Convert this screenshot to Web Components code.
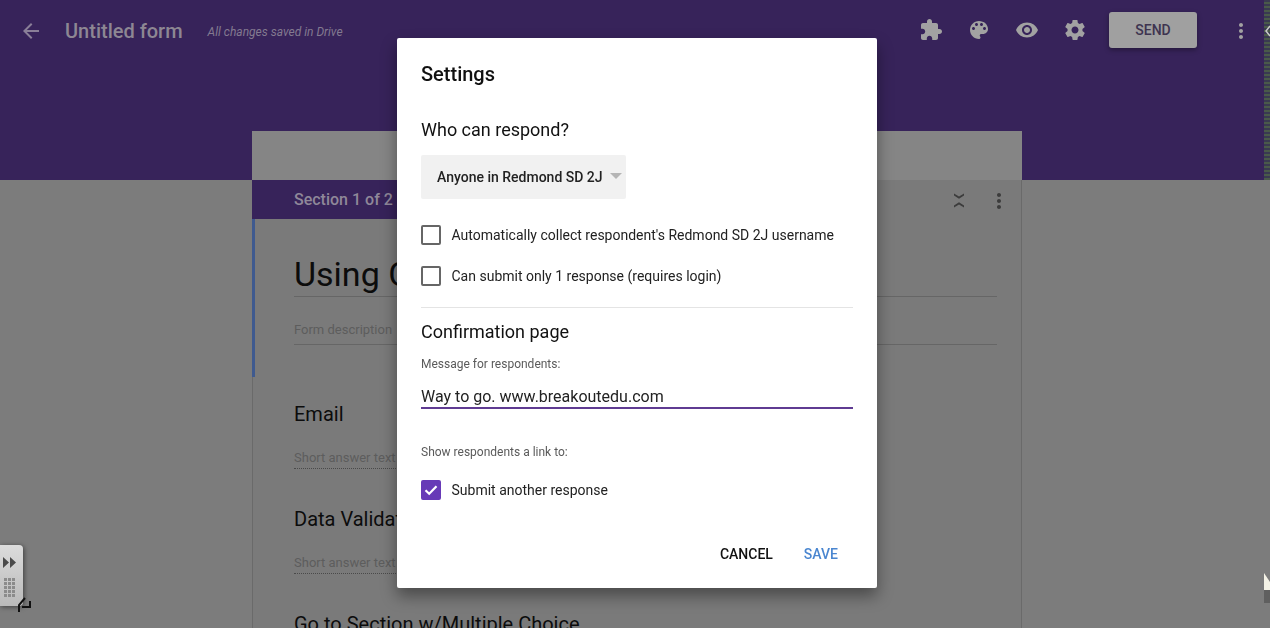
<!DOCTYPE html>
<html>
<head>
<meta charset="utf-8">
<title>Untitled form</title>
<style>
  html, body { margin: 0; height: 628px; overflow: hidden; background: #7c7c7c; }
  body { font-family: Roboto, "Liberation Sans", sans-serif; }
</style>
</head>
<body>
<form-page></form-page>
<settings-dialog></settings-dialog>
<float-palette></float-palette>

<script>
const ICONS = {
  back: "M20 11H7.83l5.59-5.59L12 4l-8 8 8 8 1.41-1.41L7.83 13H20v-2z",
  addon: "M20.5 11H19V7c0-1.1-.9-2-2-2h-4V3.5C13 2.12 11.88 1 10.5 1S8 2.12 8 3.5V5H4c-1.1 0-1.99.9-1.99 2v3.8H3.5c1.49 0 2.7 1.21 2.7 2.7s-1.21 2.7-2.7 2.7H2V20c0 1.1.9 2 2 2h3.8v-1.5c0-1.49 1.21-2.7 2.7-2.7 1.49 0 2.7 1.21 2.7 2.7V22H17c1.1 0 2-.9 2-2v-4h1.5c1.38 0 2.5-1.12 2.5-2.5S21.88 11 20.5 11z",
  palette: "M12 3c-4.97 0-9 4.03-9 9s4.03 9 9 9c.83 0 1.5-.67 1.5-1.5 0-.39-.15-.74-.39-1.01-.23-.26-.38-.61-.38-.99 0-.83.67-1.5 1.5-1.5H16c2.76 0 5-2.24 5-5 0-4.42-4.03-8-9-8zm-5.5 9c-.83 0-1.5-.67-1.5-1.5S5.67 9 6.5 9 8 9.67 8 10.5 7.33 12 6.5 12zm3-4C8.67 8 8 7.33 8 6.5S8.67 5 9.5 5s1.5.67 1.5 1.5S10.33 8 9.5 8zm5 0c-.83 0-1.5-.67-1.5-1.5S13.67 5 14.5 5s1.5.67 1.5 1.5S15.33 8 14.5 8zm3 4c-.83 0-1.5-.67-1.5-1.5S16.67 9 17.5 9s1.5.67 1.5 1.5-.67 1.5-1.5 1.5z",
  eye: "M12 4.5C7 4.5 2.73 7.61 1 12c1.73 4.39 6 7.5 11 7.5s9.27-3.11 11-7.5c-1.73-4.39-6-7.5-11-7.5zM12 17c-2.76 0-5-2.24-5-5s2.24-5 5-5 5 2.24 5 5-2.24 5-5 5zm0-8c-1.66 0-3 1.34-3 3s1.34 3 3 3 3-1.34 3-3-1.34-3-3-3z",
  gear: "M19.43 12.98c.04-.32.07-.64.07-.98s-.03-.66-.07-.98l2.11-1.65c.19-.15.24-.42.12-.64l-2-3.46c-.12-.22-.39-.3-.61-.22l-2.49 1c-.52-.4-1.08-.73-1.69-.98l-.38-2.65C14.46 2.18 14.25 2 14 2h-4c-.25 0-.46.18-.49.42l-.38 2.65c-.61.25-1.17.59-1.69.98l-2.49-1c-.23-.09-.49 0-.61.22l-2 3.46c-.13.22-.07.49.12.64l2.11 1.65c-.04.32-.07.65-.07.98s.03.66.07.98l-2.11 1.65c-.19.15-.24.42-.12.64l2 3.46c.12.22.39.3.61.22l2.49-1c.52.4 1.08.73 1.69.98l.38 2.65c.03.24.24.42.49.42h4c.25 0 .46-.18.49-.42l.38-2.65c.61-.25 1.17-.59 1.69-.98l2.49 1c.23.09.49 0 .61-.22l2-3.46c.12-.22.07-.49-.12-.64l-2.11-1.65zM12 15.5c-1.93 0-3.5-1.57-3.5-3.5s1.57-3.5 3.5-3.5 3.5 1.57 3.5 3.5-1.57 3.5-3.5 3.5z",
  more: "M12 8c1.1 0 2-.9 2-2s-.9-2-2-2-2 .9-2 2 .9 2 2 2zm0 2c-1.1 0-2 .9-2 2s.9 2 2 2 2-.9 2-2-.9-2-2-2zm0 6c-1.1 0-2 .9-2 2s.9 2 2 2 2-.9 2-2-.9-2-2-2z",
  collapse: "M7 4.5l5 3 5-3v2l-5 3.2-5-3.2zM7 18.5l5-3 5 3v-2l-5-3.2-5 3.2z"
};

class MdIcon extends HTMLElement {
  connectedCallback() {
    const size = this.getAttribute("size") || 24;
    this.attachShadow({mode: "open"}).innerHTML = `
      <style>
        :host { display: block; width: ${size}px; height: ${size}px; flex: none; }
        svg { display: block; width: 100%; height: 100%; fill: currentColor; }
      </style>
      <svg viewBox="0 0 24 24"><path d="${ICONS[this.getAttribute("name")]}"/></svg>`;
  }
}
customElements.define("md-icon", MdIcon);

class TopBar extends HTMLElement {
  connectedCallback() {
    this.attachShadow({mode: "open"}).innerHTML = `
      <style>
        :host { display: flex; align-items: center; height: 60px; color: #a2a2a2; }
        md-icon.back { margin: 2px 0 0 19px; color: #8a7f98; }
        .name { margin: 2px 0 0 22px; font-size: 20px; font-weight: 500; color: #8d8793; }
        .saved { margin: 3px 0 0 25px; font-size: 12px; font-style: italic; color: #837a90; }
        .tools { margin-left: auto; display: flex; align-items: center; gap: 24px; }
        button {
          width: 88px; height: 36px; margin: 0 32px 0 -2px; padding: 0; border: 0; border-radius: 3px;
          background: #a0a0a0; color: #3e3450; font: 500 14px Roboto, sans-serif;
          box-shadow: 0 2px 5px rgba(0,0,0,.35);
        }
        md-icon.dots { margin: 2px 11px 0 0; }
      </style>
      <md-icon class="back" name="back"></md-icon>
      <span class="name">Untitled form</span>
      <span class="saved">All changes saved in Drive</span>
      <div class="tools">
        <md-icon name="addon"></md-icon>
        <md-icon name="palette"></md-icon>
        <md-icon name="eye"></md-icon>
        <md-icon name="gear"></md-icon>
        <button>SEND</button>
      </div>
      <md-icon class="dots" name="more"></md-icon>`;
  }
}
customElements.define("top-bar", TopBar);

class FormField extends HTMLElement {
  connectedCallback() {
    const title = this.getAttribute("title");
    const hint = this.getAttribute("hint");
    this.attachShadow({mode: "open"}).innerHTML = `
      <style>
        :host { display: block; height: 105px; }
        .q { font-size: 20px; line-height: 24px; color: #0c0c0c; white-space: nowrap; }
        .a { margin-top: 24px; width: 230px; height: 18px; font-size: 13px; line-height: 16px; color: #5d5d5d;
             border-bottom: 1px dotted #4a4a4a; white-space: nowrap; }
      </style>
      <div class="q">${title}</div>
      ${hint ? `<div class="a">${hint}</div>` : ""}`;
  }
}
customElements.define("form-field", FormField);

class FormPage extends HTMLElement {
  connectedCallback() {
    this.attachShadow({mode: "open"}).innerHTML = `
      <style>
        :host { display: block; height: 628px; overflow: hidden; position: relative; }
        .head { height: 180px; width: 1264px; background: #37235a; }
        .edge { position: absolute; top: 0; right: 0; width: 6px; height: 180px;
                background: repeating-linear-gradient(#3a3a52 0 2px, #4a5a4a 2px 4px); }
        .sheet { position: absolute; left: 252px; top: 131px; width: 770px; height: 520px; }
        .tabs { height: 49px; background: #858585; }
        .card { height: 471px; background: #7a7a7a; border-right: 1px solid #6a6a6a; box-shadow: inset 1px 0 0 #6a6a6a; position: relative; }
        .band { height: 39px; width: 300px; background: #37235a; color: #8f8899; font-size: 16px; font-weight: 500;
                line-height: 40px; padding-left: 42px; box-sizing: border-box; }
        .ctl { position: absolute; top: 9px; right: 10px; display: flex; gap: 16px; color: #3c3c3c; }
        .accent { position: absolute; left: 0; top: 39px; width: 3px; height: 158px; background: #3f5a8f; }
        .body { padding: 33px 24px 0 42px; }
        h1 { margin: 0; font-size: 34px; line-height: 44px; font-weight: 400; color: #0c0c0c; height: 44px;
             border-bottom: 1px solid #666; white-space: nowrap; overflow: hidden; }
        .desc { margin-top: 23px; height: 24px; font-size: 13px; line-height: 20px; color: #5d5d5d; border-bottom: 1px solid #666; }
        .fields { margin-top: 57px; }
      </style>
      <div class="head"></div>
      <div class="edge"></div>
      <div class="sheet">
        <div class="tabs"></div>
        <div class="card">
          <div class="band">Section 1 of 2</div>
          <div class="ctl"><md-icon name="collapse"></md-icon><md-icon name="more"></md-icon></div>
          <div class="accent"></div>
          <div class="body">
            <h1>Using G</h1>
            <div class="desc">Form description</div>
            <div class="fields">
              <form-field title="Email" hint="Short answer text"></form-field>
              <form-field title="Data Validation" hint="Short answer text"></form-field>
              <form-field title="Go to Section w/Multiple Choice"></form-field>
            </div>
          </div>
        </div>
      </div>`;
    this.shadowRoot.querySelector(".head").appendChild(document.createElement("top-bar"));
  }
}
customElements.define("form-page", FormPage);

class CheckRow extends HTMLElement {
  connectedCallback() {
    const on = this.hasAttribute("checked");
    this.attachShadow({mode: "open"}).innerHTML = `
      <style>
        :host { display: flex; align-items: center; height: 20px; font-size: 14px; color: #222; }
        .box { width: 20px; height: 20px; box-sizing: border-box; border: 2px solid #666; border-radius: 2px; margin-right: 10.5px; flex: none; }
        .box.on { background: #673ab7; border-color: #673ab7; }
        svg { display: block; width: 16px; height: 16px; fill: none; stroke: #fff; stroke-width: 2.2; }
      </style>
      <div class="box ${on ? "on" : ""}">${on ? '<svg viewBox="0 0 16 16"><path d="M2.5 8.2 6.2 11.8 13.5 4.2"/></svg>' : ""}</div>
      <span><slot></slot></span>`;
  }
}
customElements.define("check-row", CheckRow);

class SettingsDialog extends HTMLElement {
  connectedCallback() {
    this.attachShadow({mode: "open"}).innerHTML = `
      <style>
        :host {
          position: fixed; left: 397px; top: 38px; width: 480px; height: 550px; box-sizing: border-box;
          padding: 24px; background: #fff; border-radius: 2px; color: #111;
          box-shadow: 0 8px 16px rgba(0,0,0,.4); display: flex; flex-direction: column;
        }
        h2 { margin: 0; font-size: 20px; line-height: 24px; font-weight: 500; }
        h3 { margin: 0; font-size: 18px; line-height: 24px; font-weight: 400; }
        .who { margin-top: 32px; }
        .select { margin-top: 13px; width: 205px; height: 44px; background: #f1f1f1; border-radius: 2px;
                  display: flex; align-items: center; padding-left: 16px; box-sizing: border-box;
                  font-size: 14px; font-weight: 500; color: #222; }
        .caret { margin-left: 7px; margin-top: -2px; border: 6px solid transparent; border-top-color: #b5b5b5; border-bottom: 0; }
        .checks { margin-top: 26px; display: flex; flex-direction: column; gap: 21px; }
        hr { margin: 21px 0 0; border: 0; border-top: 1px solid #e4e4e4; }
        .conf { margin-top: 12px; }
        label { display: block; font-size: 12px; line-height: 16px; color: #5a5a5a; }
        .msg { margin-top: 12px; }
        .input { margin-top: 13px; height: 22px; font-size: 16px; line-height: 24px; color: #222; border-bottom: 2px solid #5f3b92; }
        .link { margin-top: 35px; }
        .another { margin-top: 20px; }
        .actions { margin-top: auto; padding: 0 15px 0 0; display: flex; justify-content: flex-end; gap: 31px;
                   font-size: 14px; font-weight: 500; line-height: 20px; }
        .save { color: #4a86d0; }
      </style>
      <h2>Settings</h2>
      <h3 class="who">Who can respond?</h3>
      <div class="select">Anyone in Redmond SD 2J<span class="caret"></span></div>
      <div class="checks">
        <check-row>Automatically collect respondent's Redmond SD 2J username</check-row>
        <check-row>Can submit only 1 response (requires login)</check-row>
      </div>
      <hr>
      <h3 class="conf">Confirmation page</h3>
      <label class="msg">Message for respondents:</label>
      <div class="input">Way to go. www.breakoutedu.com</div>
      <label class="link">Show respondents a link to:</label>
      <check-row class="another" checked>Submit another response</check-row>
      <div class="actions"><span>CANCEL</span><span class="save">SAVE</span></div>`;
  }
}
customElements.define("settings-dialog", SettingsDialog);

class FloatPalette extends HTMLElement {
  connectedCallback() {
    this.attachShadow({mode: "open"}).innerHTML = `
      <style>
        :host {
          position: fixed; left: 0; top: 545px; width: 23px; height: 61px; border-radius: 0 4px 4px 0;
          background: linear-gradient(#dcdcdc, #b9b9b9); box-shadow: 1px 1px 5px rgba(0,0,0,.5);
        }
        svg { display: block; }
        .cursor { position: fixed; left: 0; top: 0; }
      </style>
      <svg width="23" height="61" viewBox="0 0 23 61">
        <path d="M3 12V23L9 17.5zM10 12V23L16 17.5z" fill="#4a4a4a"/>
        <g fill="#8b8b8b">
          ${[0,1,2,3,4].map(r => [0,1,2].map(c => `<rect x="${4 + c * 4}" y="${33 + r * 4}" width="3" height="3"/>`).join("")).join("")}
        </g>
      </svg>
      <svg class="cursor" width="1270" height="628" viewBox="0 0 1270 628">
        <path d="M25 598 19 605V612M22 607H30V601" stroke="#111" stroke-width="2" fill="none"/>
        <path d="M1264 573 1270 582V590H1264z" fill="#f4f2e6"/>
        <path d="M1264 590H1270V603H1264z" fill="#5f5f5f"/>
        <path d="M1270 26 1266 31 1270 36" stroke="#c9c9c9" stroke-width="1.5" fill="none"/>
      </svg>`;
  }
}
customElements.define("float-palette", FloatPalette);
</script>
</body>
</html>
